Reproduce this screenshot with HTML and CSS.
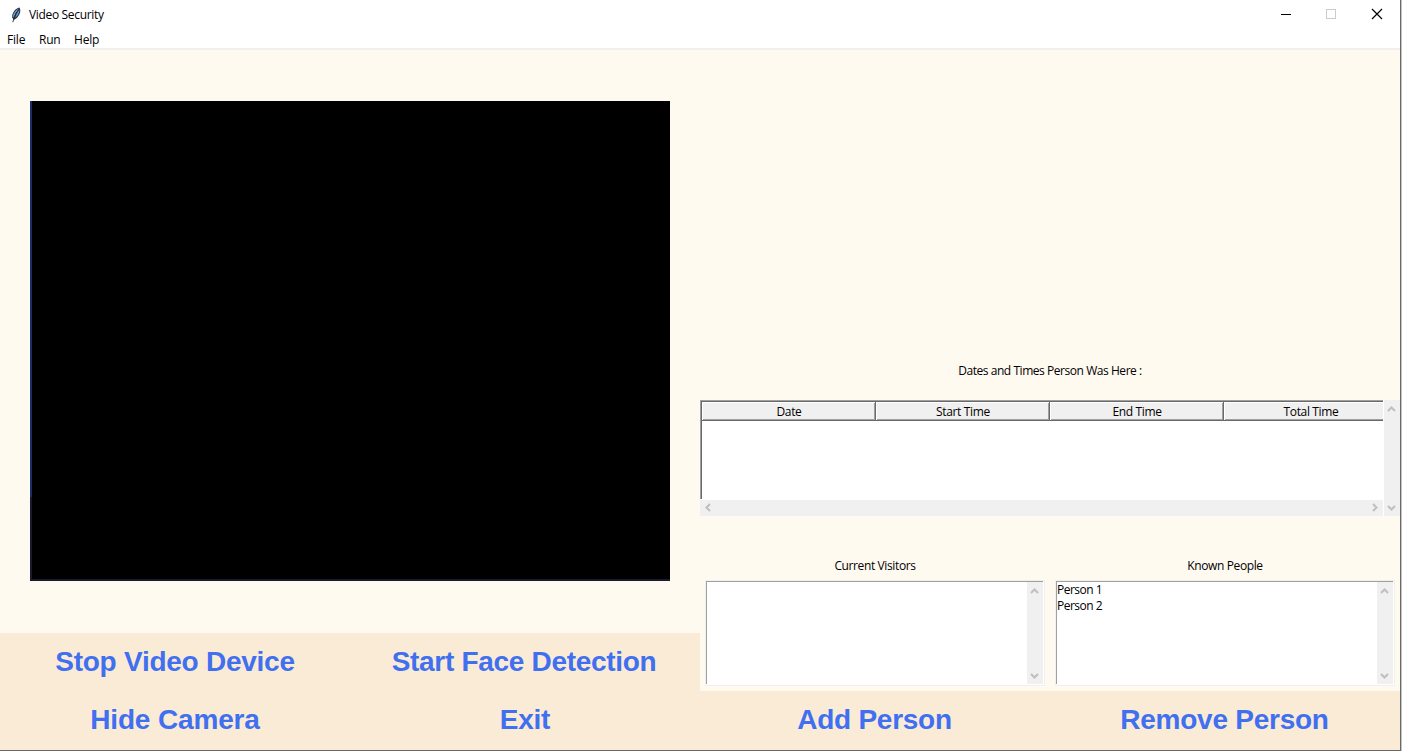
FILE: index.html
```html
<!DOCTYPE html>
<html lang="en">
<head>
<meta charset="utf-8">
<title>Video Security</title>
<link rel="stylesheet" href="styles.css">
</head>
<body>
<div class="window">
  <header class="titlebar">
    <svg class="feather" width="10" height="16" viewBox="0 0 10 16">
      <path d="M8.400 .4C9.800 2 9.500 5 8.300 7.600 7 10.200 5.200 12 3 12.800L1.200 10.800C.8 7 2.600 4.500 4.600 2.600 6 1.300 7.200 .5 8.400 .4Z" fill="#26303c"/>
      <path d="M7.600 1.600C5.400 2.800 2.400 5.600 2 9L2.700 11C3.700 8.500 5.300 5 7.600 1.600Z" fill="#6aa6e0"/>
      <path d="M8.500 2.600C8.700 5.600 6.700 9.200 4.100 11 4.800 8 6.500 5.200 8.500 2.600Z" fill="#6296d0"/>
      <path d="M5.600 5C4 8 2.600 11.500 1.800 15.200" fill="none" stroke="#222" stroke-width=".9"/>
    </svg>
    <span class="title">Video Security</span>
    <div class="controls">
      <svg width="46" height="30" shape-rendering="crispEdges"><path d="M18 14h10v1H18z" fill="#000"/></svg>
      <svg width="46" height="30" shape-rendering="crispEdges"><rect x="17.500" y="9.500" width="9" height="9" fill="none" stroke="#ccc"/></svg>
      <svg width="46" height="30"><path d="M17 9l10 10M27 9L17 19" fill="none" stroke="#000" stroke-width="1.200"/></svg>
    </div>
  </header>
  <nav class="menubar"><span class="m-file">File</span><span class="m-run">Run</span><span class="m-help">Help</span></nav>
  <main class="content">
    <section class="left">
      <div class="stage"><div class="video"><div class="edge"></div></div></div>
      <div class="buttons">
        <button class="b-stop">Stop Video Device</button><button class="b-face">Start Face Detection</button>
        <button class="b-hide">Hide Camera</button><button class="b-exit">Exit</button>
      </div>
    </section>
    <section class="right">
      <h2 class="caption">Dates and Times Person Was Here :</h2>
      <div class="table-area">
        <div class="table-col">
          <div class="table">
            <div class="thead">
              <div class="th">Date</div><div class="th">Start Time</div><div class="th">End Time</div><div class="th">Total Time</div>
            </div>
          </div>
          <div class="hscroll">
            <svg class="arrow" viewBox="0 0 16 16"><path d="M10 4L6.500 7.500 10 11"/></svg>
            <svg class="arrow" viewBox="0 0 16 16"><path d="M6 4L9.500 7.500 6 11"/></svg>
          </div>
        </div>
        <div class="vscroll">
          <svg class="arrow" viewBox="0 0 16 16"><path d="M4 11L7.500 7.500 11 11"/></svg>
          <svg class="arrow" viewBox="0 0 16 16"><path d="M4 6L7.500 9.500 11 6"/></svg>
        </div>
      </div>
      <div class="lists">
        <div class="group">
          <h2 class="label">Current Visitors</h2>
          <div class="listbox"><div class="inner"><ul class="items"></ul>
            <div class="vscroll">
              <svg class="arrow" viewBox="0 0 16 16"><path d="M4 11L7.500 7.500 11 11"/></svg>
              <svg class="arrow" viewBox="0 0 16 16"><path d="M4 6L7.500 9.500 11 6"/></svg>
            </div></div></div>
        </div>
        <div class="group">
          <h2 class="label">Known People</h2>
          <div class="listbox"><div class="inner"><ul class="items"><li>Person 1</li><li>Person 2</li></ul>
            <div class="vscroll">
              <svg class="arrow" viewBox="0 0 16 16"><path d="M4 11L7.500 7.500 11 11"/></svg>
              <svg class="arrow" viewBox="0 0 16 16"><path d="M4 6L7.500 9.500 11 6"/></svg>
            </div></div></div>
        </div>
      </div>
      <div class="buttons">
        <button class="b-add">Add Person</button><button class="b-remove">Remove Person</button>
      </div>
    </section>
  </main>
</div>
</body>
</html>
```
FILE: styles.css
```css
* { box-sizing: border-box; }
body {
  margin: 0;
  width: 1402px;
  height: 751px;
  overflow: hidden;
  background: #c4c4c4;
  font: 12px/16px "Open Sans", "Noto Sans", sans-serif;
  color: #000;
}
.window {
  width: 1401px;
  height: 751px;
  display: flex;
  flex-direction: column;
  background: #fff;
  border-right: 1px solid #696969;
  border-bottom: 1px solid #696969;
}
.titlebar {
  height: 30px;
  display: flex;
  align-items: center;
  padding-left: 11px;
}
.feather { margin-top: -1px; }
.title { margin-left: 8px; letter-spacing: -.33px; }
.controls { display: flex; margin-left: auto; margin-right: -1px; }
.controls svg { display: block; }
.menubar {
  height: 20px;
  padding-left: 7px;
  display: flex;
  line-height: 20px;
  border-bottom: 2px solid #f0f0f0;
  letter-spacing: -.2px;
}
.m-file { width: 32px; }
.m-run { width: 35px; }
.content { flex: 1; display: flex; min-height: 0; }
.left, .right {
  width: 700px;
  display: flex;
  flex-direction: column;
  background: #fffaf0;
}
.stage { height: 583px; padding: 51px 30px 0; }
.video {
  height: 480px;
  background: #000;
  border-left: 2px solid #1a1a2e;
  border-bottom: 2px solid #1a1a2e;
}
.edge { width: 2px; height: 396px; margin-left: -2px; background: #1c2c64; }
.buttons {
  flex: 1;
  display: grid;
  grid-template-columns: 350px 350px;
  grid-auto-rows: 58px;
  background: #faebd7;
}
button {
  border: 0;
  padding: 0 0 1px;
  background: transparent;
  color: #4070f0;
  font: bold 28px/32px "Liberation Sans", Arial, sans-serif;
  letter-spacing: -.25px;
}
.b-face { letter-spacing: -.31px; padding-right: 2px; }
.b-hide { letter-spacing: -.15px; }
.b-add, .b-remove { padding-right: 1px; }
h2 { margin: 0; font: inherit; text-align: center; }
.caption { height: 350px; padding-top: 313px; letter-spacing: -.45px; }
.table-area { height: 116px; display: flex; background: #fff; gap: 1px; }
.table-col { width: 683px; }
.table {
  height: 99px;
  border-left: 1px solid #a0a0a0;
  border-top: 1px solid #a0a0a0;
  overflow: hidden;
  background: linear-gradient(90deg, #696969 1px, #fff 1px);
}
.thead {
  display: flex;
  width: 700px;
  height: 20px;
  margin-left: 1px;
  border-top: 1px solid #696969;
}
.th {
  width: 174px;
  flex: none;
  padding-left: 1px;
  background: #f0f0f0;
  border-right: 1px solid #696969;
  border-bottom: 1px solid #696969;
  box-shadow: inset 1px 1px #fff, inset -1px -1px #a0a0a0;
  text-align: center;
  line-height: 20px;
  letter-spacing: -.35px;
}
.hscroll {
  height: 16px;
  margin-top: 1px;
  background: #f0f0f0;
  display: flex;
  justify-content: space-between;
}
.vscroll {
  width: 16px;
  background: #f0f0f0;
  display: flex;
  flex-direction: column;
  justify-content: space-between;
}
.arrow { width: 16px; height: 16px; fill: none; stroke: #bfbfbf; stroke-width: 2; }
.lists { display: flex; height: 175px; padding-top: 42px; }
.group { width: 350px; padding: 0 5px; }
.label { height: 22px; letter-spacing: -.38px; }
.listbox { height: 106px; border: 1px solid #f0f0f0; background: #fff; padding: 0 1px 1px 0; }
.inner {
  height: 103px;
  display: flex;
  border-left: 1px solid #a0a0a0;
  border-top: 1px solid #a0a0a0;
}
.items { flex: 1; margin: 0; padding: 0; list-style: none; letter-spacing: -.5px; }
```
